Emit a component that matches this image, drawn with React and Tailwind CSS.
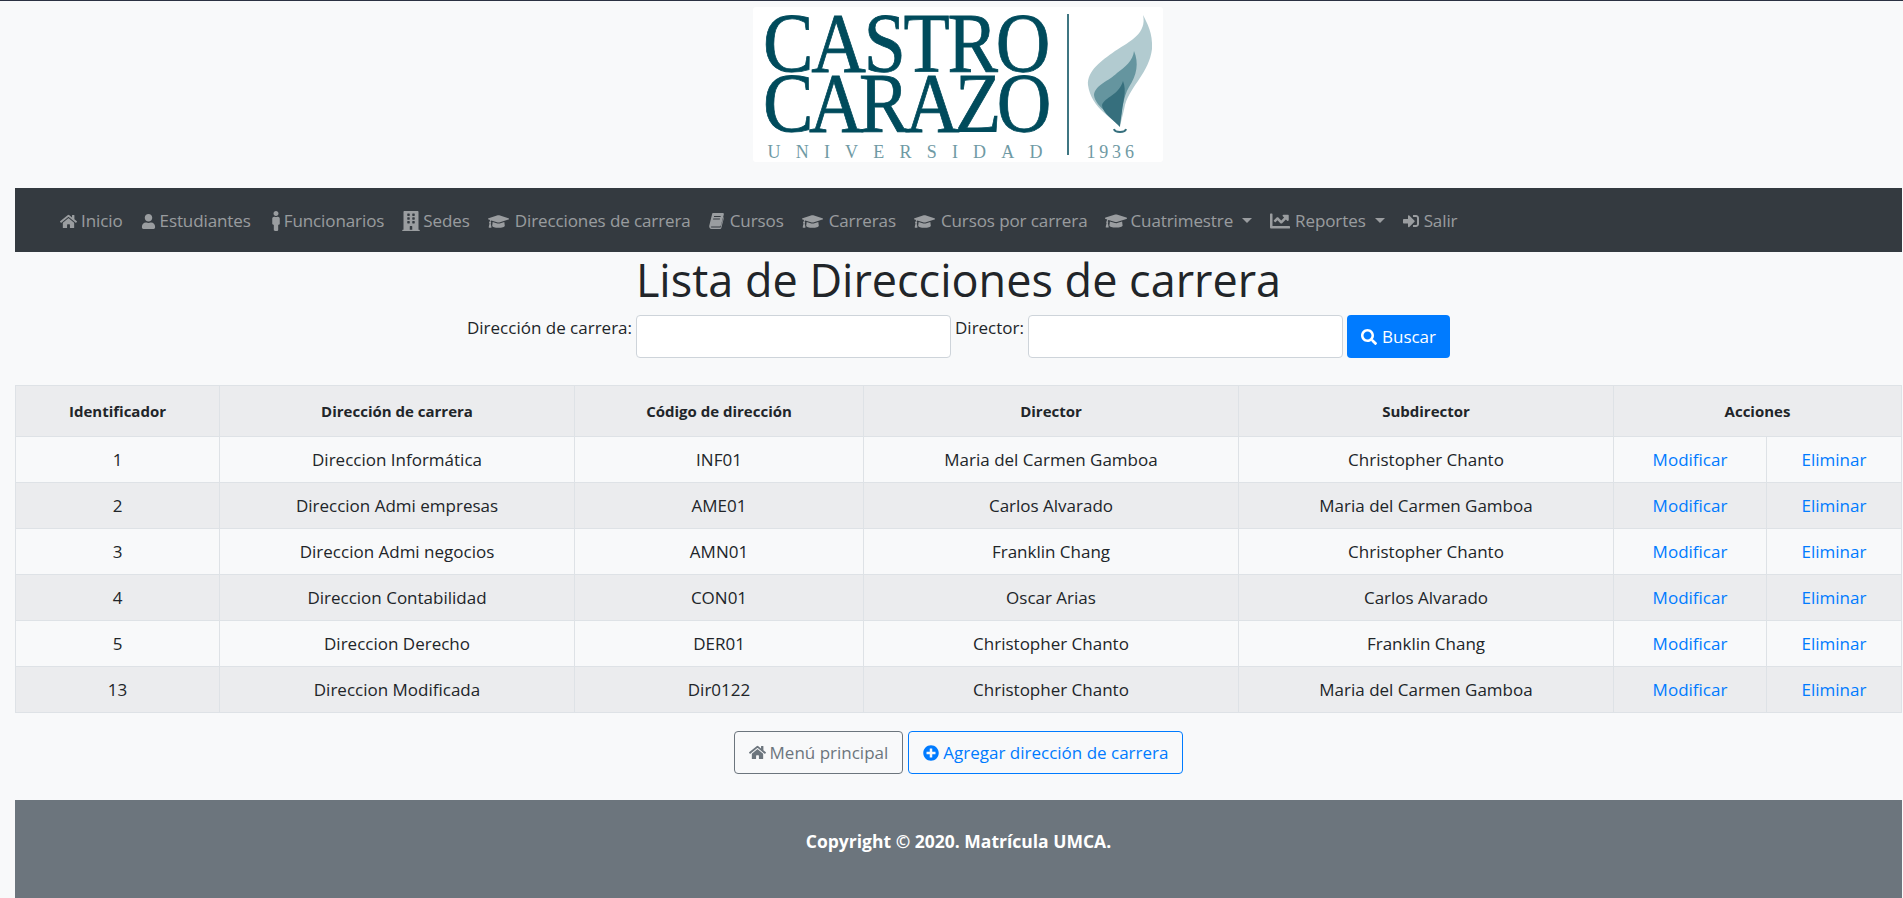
import React from 'react';
import {
  FaHome, FaUser, FaMale, FaBuilding, FaGraduationCap, FaChartLine,
  FaSignInAlt, FaSearch, FaPlusCircle,
} from 'react-icons/fa';

// fa-book de Font Awesome 4, el paquete solo trae la version nueva
const BookIcon = ({ className = '' }) => (
  <svg className={className} width="15" height="16" viewBox="0 0 15 16" fill="currentColor">
    <path d="M4 0 H14 C15 0 15 1 14.7 2 L12 12 C11.7 13 11 13.5 10 13.5 H2.5 C1.5 13.5 1.5 14.5 2.5 14.5 H11.5 L14.6 4 L15 4.5 L12.3 15 C12.1 15.6 11.7 16 11 16 H2.5 C1 16 0 14.5 0.2 13 L3 1.5 C3.2 0.6 3.4 0 4 0 Z M5 3 V4 H11.5 L11.8 3 Z M4.3 5.5 L4 6.5 H10.8 L11 5.5 Z" fillRule="evenodd" />
  </svg>
);

const Logo = () => (
  <div className="w-[410px] h-[155px] bg-white rounded-[3px] relative font-['Liberation_Serif',serif] text-[#004b5c]">
    <div className="absolute left-[10px] top-[1px] text-[84px] leading-[60px] [-webkit-text-stroke:0.8px_#004b5c] whitespace-nowrap scale-x-[0.9] origin-left">
      <div className="h-[60px] pt-[6px] tracking-[-2.4px]">CASTRO</div>
      <div className="h-[60px] pt-[6px] tracking-[-5px]">CARAZO</div>
    </div>
    <div className="absolute left-[15px] top-[135px] text-[18px] leading-[20px] tracking-[15.2px] text-[#6f9aa4] whitespace-nowrap">UNIVERSIDAD</div>
    <div className="absolute left-[314px] top-[7px] w-[2px] h-[141px] bg-[#3f7682]" />
    <div className="absolute left-[334px] top-[135px] text-[18px] leading-[20px] tracking-[3.8px] text-[#6f9aa4] whitespace-nowrap">1936</div>
    <svg className="absolute left-[334px] top-[8px]" width="66" height="118" viewBox="0 0 66 118">
      <path d="M56 0 C60 8 66 18 65 34 C62 58 44 70 38 90 C36 100 34 106 33 112 C28 104 4 94 1 70 C0 56 14 46 28 36 C44 26 60 18 56 0 Z" fill="#b2cbd0" />
      <path d="M47 36 C52 48 50 60 42 72 C36 82 34 100 33 110 C28 102 8 92 7 80 C8 70 22 66 30 58 C38 52 46 46 47 36 Z" fill="#65959f" />
      <path d="M36 66 C40 76 36 86 35 96 C34 104 33 108 33 112 C28 106 15 98 15 90 C18 82 32 80 36 66 Z" fill="#366f7d" />
      <path d="M27 114 C28 118 38 118 39 114" fill="none" stroke="#366f7d" strokeWidth="2" />
    </svg>
  </div>
);

const NavItem = ({ icon: Icon, iconClass = 'text-[17px] mr-[4px]', children, caret }) => (
  <a className="flex items-center h-[40px] px-[9px] text-[rgba(255,255,255,0.5)]">
    {Icon && <Icon className={`shrink-0 ${iconClass}`} />}
    <span>{children}</span>
    {caret && <span className="ml-[9px] mb-[1px] border-t-[5px] border-x-[5px] border-x-transparent border-t-[rgba(255,255,255,0.5)]" />}
  </a>
);

const rows = [
  ['1', 'Direccion Informática', 'INF01', 'Maria del Carmen Gamboa', 'Christopher Chanto'],
  ['2', 'Direccion Admi empresas', 'AME01', 'Carlos Alvarado', 'Maria del Carmen Gamboa'],
  ['3', 'Direccion Admi negocios', 'AMN01', 'Franklin Chang', 'Christopher Chanto'],
  ['4', 'Direccion Contabilidad', 'CON01', 'Oscar Arias', 'Carlos Alvarado'],
  ['5', 'Direccion Derecho', 'DER01', 'Christopher Chanto', 'Franklin Chang'],
  ['13', 'Direccion Modificada', 'Dir0122', 'Christopher Chanto', 'Maria del Carmen Gamboa'],
];

const cap = 'text-[21px] mr-[6px]';

const App = () => {
  return (
    <div className="min-h-[898px] bg-[#f8f9fa] border-t border-[#2b3142] font-['Open_Sans',sans-serif] text-[17px] text-[#212529] pl-[15px] pr-px flex flex-col overflow-hidden">
      {/* Logo */}
      <div className="flex justify-center pt-[6px] h-[187px] pr-[2px]">
        <Logo />
      </div>

      {/* Navbar */}
      <nav className="h-[64px] pt-[2px] bg-[#343a40] flex items-center pl-[36px] text-[17px] tracking-[-0.1px] whitespace-nowrap">
        <NavItem icon={FaHome}>Inicio</NavItem>
        <NavItem icon={FaUser} iconClass="text-[15px] mr-[4px]">Estudiantes</NavItem>
        <NavItem icon={FaMale} iconClass="w-[14px] h-[20px] mr-px">Funcionarios</NavItem>
        <NavItem icon={FaBuilding} iconClass="w-[18px] h-[20px] mr-[3px]">Sedes</NavItem>
        <NavItem icon={FaGraduationCap} iconClass={cap}>Direcciones de carrera</NavItem>
        <NavItem icon={BookIcon} iconClass="mr-[6px]">Cursos</NavItem>
        <NavItem icon={FaGraduationCap} iconClass={cap}>Carreras</NavItem>
        <NavItem icon={FaGraduationCap} iconClass={cap}>Cursos por carrera</NavItem>
        <NavItem icon={FaGraduationCap} iconClass="text-[22px] mr-[3px]" caret>Cuatrimestre</NavItem>
        <NavItem icon={FaChartLine} iconClass="text-[20px] mr-[5px]" caret>Reportes</NavItem>
        <NavItem icon={FaSignInAlt} iconClass="text-[16px] mr-[5px]">Salir</NavItem>
      </nav>

      {/* Title */}
      <h1 className="text-center text-[45px] leading-[48px] mt-[4px]">Lista de Direcciones de carrera</h1>

      {/* Search */}
      <div className="flex justify-center items-start gap-[4px] mt-[11px] text-[17px]">
        <label className="leading-[26px]">Dirección de carrera:</label>
        <input className="w-[315px] h-[43px] bg-white border border-[#ced4da] rounded-[4px]" />
        <label className="leading-[26px]">Director:</label>
        <input className="w-[315px] h-[43px] bg-white border border-[#ced4da] rounded-[4px]" />
        <button className="h-[43px] px-[14px] flex items-center gap-[5px] bg-[#007bff] text-white rounded-[4px]">
          <FaSearch className="text-[16px]" />
          Buscar
        </button>
      </div>

      {/* Table */}
      <table className="mt-[27px] w-full table-fixed border-collapse text-center text-[17px]">
        <colgroup>
          <col className="w-[204px]" />
          <col className="w-[355px]" />
          <col className="w-[289px]" />
          <col className="w-[375px]" />
          <col className="w-[375px]" />
          <col className="w-[153px]" />
          <col />
        </colgroup>
        <thead>
          <tr className="h-[51px] bg-[#ebecee] text-[15px]">
            <th className="border border-[#dee2e6] font-bold">Identificador</th>
            <th className="border border-[#dee2e6] font-bold">Dirección de carrera</th>
            <th className="border border-[#dee2e6] font-bold">Código de dirección</th>
            <th className="border border-[#dee2e6] font-bold">Director</th>
            <th className="border border-[#dee2e6] font-bold">Subdirector</th>
            <th colSpan={2} className="border border-[#dee2e6] font-bold">Acciones</th>
          </tr>
        </thead>
        <tbody>
          {rows.map((r, i) => (
            <tr key={r[0]} className={`h-[46px] ${i % 2 ? 'bg-[#ebecee]' : ''}`}>
              {r.map((c, j) => (
                <td key={j} className="border border-[#dee2e6]">{c}</td>
              ))}
              <td className="border border-[#dee2e6] text-[#007bff]">Modificar</td>
              <td className="border border-[#dee2e6] text-[#007bff]">Eliminar</td>
            </tr>
          ))}
        </tbody>
      </table>

      {/* Acciones */}
      <div className="flex justify-center gap-[5px] mt-[18px] text-[17px]">
        <button className="h-[43px] px-[14px] flex items-center gap-[4px] border border-[#6c757d] text-[#6c757d] rounded-[4px]">
          <FaHome className="text-[17px]" />
          Menú principal
        </button>
        <button className="h-[43px] px-[14px] flex items-center gap-[4px] border border-[#007bff] text-[#007bff] rounded-[4px]">
          <FaPlusCircle className="text-[16px]" />
          Agregar dirección de carrera
        </button>
      </div>

      {/* Footer */}
      <footer className="mt-[26px] flex-1 bg-[#6c757d] text-white font-bold text-center pt-[28px] text-[17.5px]">
        Copyright © 2020. Matrícula UMCA.
      </footer>
    </div>
  );
};

export default App;
